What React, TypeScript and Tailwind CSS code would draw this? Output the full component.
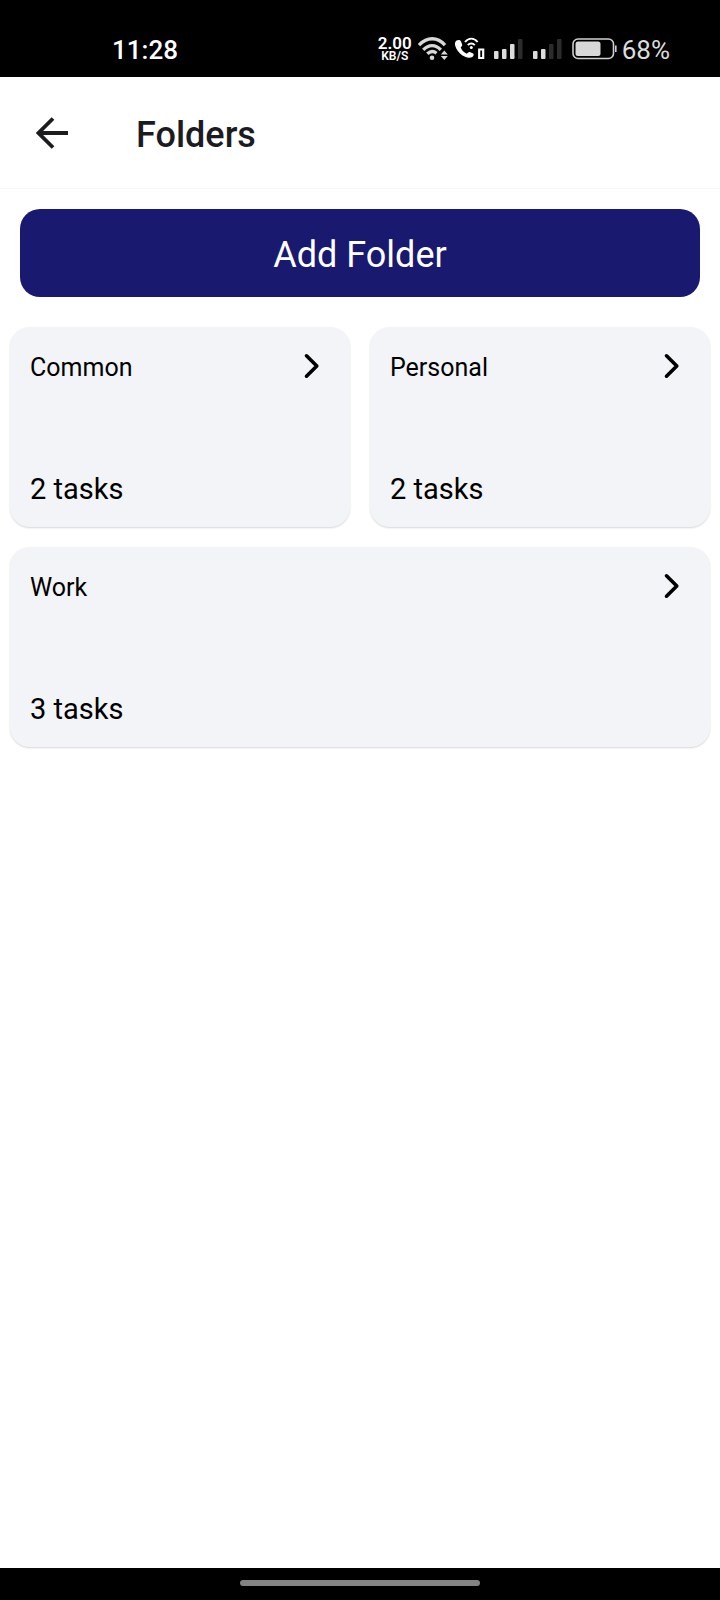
const folders = [
  { name: "Common", tasks: 2, wide: false },
  { name: "Personal", tasks: 2, wide: false },
  { name: "Work", tasks: 3, wide: true },
];

function WifiIcon() {
  return (
    <svg width="30" height="24" viewBox="0 0 30 24" fill="none" stroke="#d8d8d8" strokeWidth="3.300" aria-hidden="true">
      <path d="M1 8.200C9-.4 19.500-.4 27 8.200" />
      <path d="M5.300 12.800C10.600 7.200 17.600 7.200 22.800 12.800" />
      <path d="M9.300 16.800C12.500 13.800 15.600 13.800 18.500 16.200" />
      <circle cx="14" cy="20.700" r="2.300" fill="#d8d8d8" stroke="none" />
      <path d="M26.300 13.500l3.500 4h-7zM26.300 23l3.500-4h-7z" fill="#d8d8d8" stroke="none" />
    </svg>
  );
}

function WifiCallIcon() {
  return (
    <svg width="31" height="23" viewBox="0 0 31 23" fill="none" aria-hidden="true">
      <path
        d="M2.600 3.600C1 4.600.5 6.600 1.300 9c2 6 7 10.800 13.200 11.700 2.300.3 4.300-.6 5-2.200.4-1 .1-1.700-.8-2.200l-2.300-1c-.9-.4-1.700-.2-2.500.5l-1.200.9c-2.900-1.300-4.900-3.400-6-6.200l1-1.200c.6-.7.7-1.500.3-2.300L7 4.500C6.200 3 4.200 2.600 2.600 3.600z"
        fill="#fff"
      />
      <path d="M11 5c3.800-4.500 8.800-4.500 12.600 0M13.800 8.200c2-2.300 5-2.300 7 0" stroke="#fff" strokeWidth="1.900" />
      <circle cx="17.300" cy="10.500" r="1.500" fill="#fff" />
      <path d="M25.200 12.500h4v8.500h-4z" stroke="#fff" strokeWidth="2.200" />
    </svg>
  );
}

function SignalIcon({ level }: { level: number }) {
  const bars = [
    { x: 0, y: 12 },
    { x: 8, y: 10 },
    { x: 16, y: 5 },
    { x: 24, y: 0 },
  ];
  return (
    <svg width="29" height="20" viewBox="0 0 29 20" aria-hidden="true">
      {bars.map((bar, i) => (
        <rect key={bar.x} x={bar.x} y={bar.y} width="4.500" height={20 - bar.y} rx="1" fill={i < level ? "#dcdcdc" : "#2c2c2c"} />
      ))}
    </svg>
  );
}

function BatteryIcon() {
  return (
    <svg width="45" height="22" viewBox="0 0 45 22" fill="none" aria-hidden="true">
      <rect x="1" y="1" width="40.500" height="19.500" rx="5" stroke="#cfcfcf" strokeWidth="1.600" />
      <rect x="3.500" y="3.500" width="25" height="14.500" rx="2.500" fill="#d8d8d8" />
      <path d="M43.800 7.500v6.500" stroke="#cfcfcf" strokeWidth="1.600" />
    </svg>
  );
}

function StatusBar() {
  return (
    <div className="flex h-[77px] items-center bg-black pt-[22px] pr-[50px] pl-[112px] text-white">
      <time className="text-[26px] leading-8 font-medium">11:28</time>
      <div className="ml-auto flex items-center">
        <div className="mb-0.5 flex flex-col items-center font-semibold">
          <span className="text-[17px] leading-[15px]">2.00</span>
          <span className="text-[12px] leading-[11px]">KB/S</span>
        </div>
        <div className="mr-[9px] mb-0.5 ml-1.5 flex items-center gap-1.5">
          <WifiIcon />
          <WifiCallIcon />
        </div>
        <div className="mb-0.5 flex items-center gap-2.5">
          <SignalIcon level={3} />
          <SignalIcon level={2} />
          <BatteryIcon />
        </div>
        <span className="ml-[5px] text-[26px] leading-8 text-[#dcdcdc]">68%</span>
      </div>
    </div>
  );
}

function FolderCard({ name, tasks, wide }: { name: string; tasks: number; wide: boolean }) {
  return (
    <a
      href={"#" + name.toLowerCase()}
      className={
        (wide ? "col-span-2 " : "") +
        "flex h-[200px] flex-col justify-between rounded-[20px] bg-[#f2f4f8] px-5 pt-[21px] pb-[18px] text-black shadow-[0_1px_2px_rgba(0,0,0,0.16)]"
      }
    >
      <span className="flex items-center justify-between">
        <span className="text-[25px] leading-10">{name}</span>
        <svg className="mr-2.5 mb-1" width="18" height="26" viewBox="0 0 18 26" fill="none" stroke="#000" strokeWidth="3.600" strokeLinecap="round" strokeLinejoin="round" aria-hidden="true">
          <path d="M4.500 2.800l10.300 10.200-10.300 10.200" />
        </svg>
      </span>
      <span className="text-[29px] leading-10">{tasks} tasks</span>
    </a>
  );
}

export default function App() {
  return (
    <div className="flex min-h-screen flex-col bg-white font-['Roboto',sans-serif]">
      <StatusBar />
      <header className="flex h-[112px] items-center border-b border-[#f8f8f8] pl-9 text-[#1c1b1f]">
        <button type="button" aria-label="Back" className="flex size-8 items-center justify-center">
          <svg width="32" height="32" viewBox="0 0 32 32" fill="none" stroke="#1c1b1f" strokeWidth="3.800" aria-hidden="true">
            <path d="M32 16H3M17 1.500L2.500 16 17 30.500" />
          </svg>
        </button>
        <h1 className="ml-[68px] pt-1 text-[36px] leading-[44px] font-medium">Folders</h1>
      </header>
      <main className="flex flex-1 flex-col px-2.5 pt-5">
        <button type="button" className="mx-2.5 h-[88px] rounded-[20px] bg-[#191970] pt-1 text-[36px] leading-[44px] text-white">
          Add Folder
        </button>
        <div className="mt-[30px] grid grid-cols-2 gap-5">
          {folders.map((folder) => (
            <FolderCard key={folder.name} {...folder} />
          ))}
        </div>
      </main>
      <footer className="flex h-8 items-center justify-center bg-black pb-0.5">
        <div className="h-1.5 w-1/3 rounded-full bg-[#848484]" />
      </footer>
    </div>
  );
}
